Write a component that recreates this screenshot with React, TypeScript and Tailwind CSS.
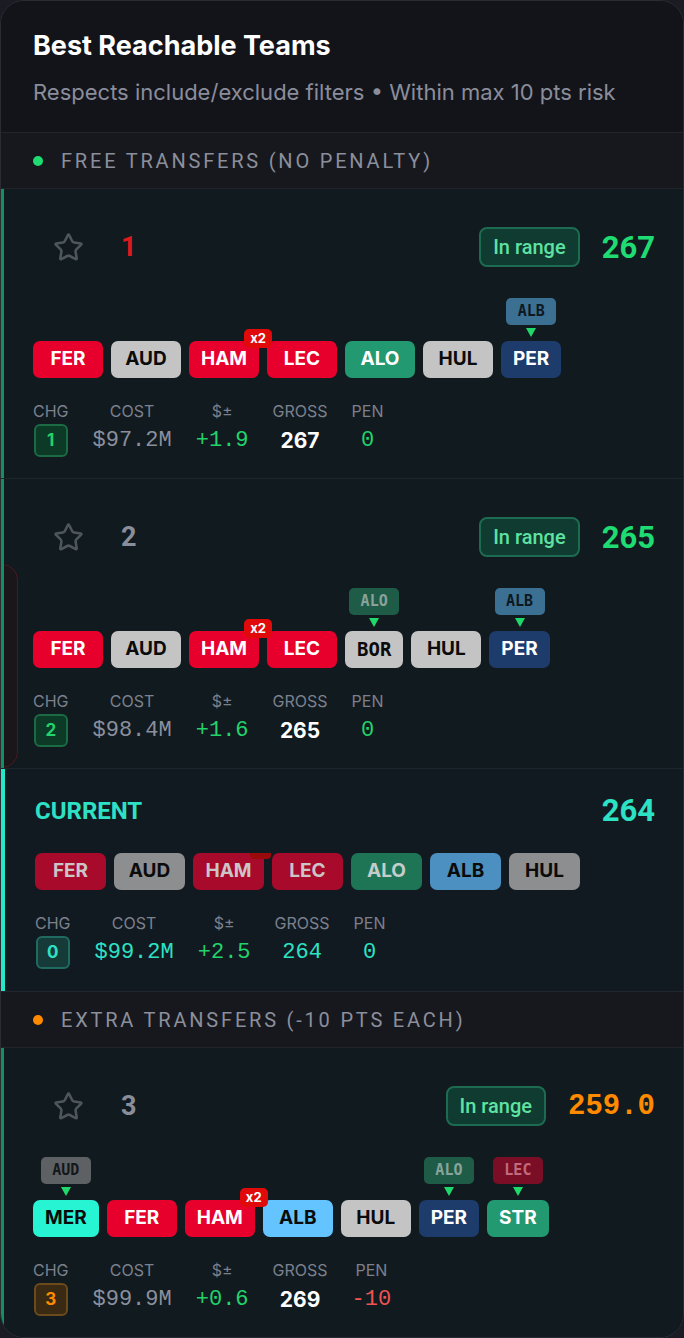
import { Star } from 'lucide-react'

type Tag = { code: string; cls: string }

type Pick = {
  code: string
  cls: string
  mono?: boolean
  x2?: boolean
  tag?: Tag
}

type Stat = {
  chg: string
  cost: string
  delta: string
  gross: string
  pen: string
}

type Team = {
  rank: string
  rankCls: string
  score: string
  scoreCls: string
  chgCls: string
  penCls: string
  picks: Array<Pick>
  stat: Stat
  ghost?: boolean
}

const RED = 'bg-[#e8002d] text-white'
const GREY = 'bg-[#c4c4c4] text-[#0b0b0b]'
const GREEN = 'bg-[#229971] text-white'
const NAVY = 'bg-[#1d3b6b] text-white'

const TAG_ALB: Tag = { code: 'ALB', cls: 'bg-[#3c7093] text-[#0d1820]' }
const TAG_ALO: Tag = { code: 'ALO', cls: 'bg-[#1e5c48] text-[#8aa39a]' }
const TAG_LEC: Tag = { code: 'LEC', cls: 'bg-[#7a0e26] text-[#c06b7d]' }
const TAG_AUD: Tag = { code: 'AUD', cls: 'bg-[#5e6164] text-[#14181b]' }

const FREE_TEAMS: Array<Team> = [
  {
    rank: '1',
    rankCls: 'text-[#dc1b1f]',
    score: '267',
    scoreCls: "text-[#1fdc72] font-['Roboto'] font-bold text-[31px]",
    chgCls: 'border-[#1b6b45] bg-[#0c3a26] text-[#22d36c]',
    penCls: 'text-[#22d36c]',
    picks: [
      { code: 'FER', cls: RED },
      { code: 'AUD', cls: GREY },
      { code: 'HAM', cls: RED, x2: true },
      { code: 'LEC', cls: RED },
      { code: 'ALO', cls: GREEN },
      { code: 'HUL', cls: GREY },
      { code: 'PER', cls: NAVY, tag: TAG_ALB }
    ],
    stat: { chg: '1', cost: '$97.2M', delta: '+1.9', gross: '267', pen: '0' }
  },
  {
    rank: '2',
    rankCls: 'text-[#8a8e9a]',
    score: '265',
    scoreCls: "text-[#1fdc72] font-['Roboto'] font-bold text-[31px]",
    chgCls: 'border-[#1b6b45] bg-[#0c3a26] text-[#22d36c]',
    penCls: 'text-[#22d36c]',
    ghost: true,
    picks: [
      { code: 'FER', cls: RED },
      { code: 'AUD', cls: GREY },
      { code: 'HAM', cls: RED, x2: true },
      { code: 'LEC', cls: RED },
      { code: 'BOR', cls: GREY, mono: true, tag: TAG_ALO },
      { code: 'HUL', cls: GREY },
      { code: 'PER', cls: NAVY, tag: TAG_ALB }
    ],
    stat: { chg: '2', cost: '$98.4M', delta: '+1.6', gross: '265', pen: '0' }
  }
]

const EXTRA_TEAM: Team = {
  rank: '3',
  rankCls: 'text-[#8a8e9a]',
  score: '259.0',
  scoreCls: "text-[#ff8a00] font-['Liberation_Mono',monospace] font-bold text-[29px]",
  chgCls: 'border-[#6b4a1c] bg-[#3a2a14] text-[#ff8a00]',
  penCls: 'text-[#f05454]',
  picks: [
    { code: 'MER', cls: 'bg-[#27f4d2] text-[#0b0b0b]', tag: TAG_AUD },
    { code: 'FER', cls: RED },
    { code: 'HAM', cls: RED, x2: true },
    { code: 'ALB', cls: 'bg-[#64c4ff] text-[#0b0b0b]' },
    { code: 'HUL', cls: GREY },
    { code: 'PER', cls: NAVY, tag: TAG_ALO },
    { code: 'STR', cls: GREEN, tag: TAG_LEC }
  ],
  stat: { chg: '3', cost: '$99.9M', delta: '+0.6', gross: '269', pen: '-10' }
}

const CURRENT_PICKS: Array<Pick> = [
  { code: 'FER', cls: 'bg-[#a80a2b] text-[#cbc5c7]' },
  { code: 'AUD', cls: 'bg-[#8d8e90] text-[#0b0b0b]' },
  { code: 'HAM', cls: 'bg-[#a80a2b] text-[#cbc5c7]', x2: true },
  { code: 'LEC', cls: 'bg-[#a80a2b] text-[#cbc5c7]' },
  { code: 'ALO', cls: 'bg-[#1e7556] text-[#c4cdc9]' },
  { code: 'ALB', cls: 'bg-[#4b90c0] text-[#0b0b0b]' },
  { code: 'HUL', cls: 'bg-[#8d8e90] text-[#0b0b0b]' }
]

const MONO = "font-['Liberation_Mono',monospace]"

const App = () => {
  return (
    <div className="min-h-screen bg-[#1b1c23] font-['Inter',sans-serif]">
      <div className="rounded-[24px] border border-[#2a2b33] overflow-hidden bg-[#121a20]">
        <Header />
        <SectionHeader dot="bg-[#1fdc72]" label="Free Transfers (No Penalty)" />
        {FREE_TEAMS.map((it) => (
          <TeamCard key={it.rank} team={it} />
        ))}
        <CurrentCard />
        <SectionHeader dot="bg-[#ff8a00]" label="Extra Transfers (-10 pts each)" />
        <TeamCard team={EXTRA_TEAM} last />
      </div>
    </div>
  )
}

const Header = () => {
  return (
    <header className="bg-[#13141a] px-[32px] pt-[29px] pb-[26px] border-b border-[#24252c]">
      <h1 className="text-[27px] leading-8 font-bold text-white">Best Reachable Teams</h1>
      <p className="mt-4 text-[22px] leading-7 text-[#8a8d9c]">
        Respects include/exclude filters • Within max 10 pts risk
      </p>
    </header>
  )
}

const SectionHeader = ({ dot, label }: { dot: string; label: string }) => {
  return (
    <div className="h-[56px] flex items-center gap-[18px] px-[32px] bg-[#17181e] border-b border-[#22242b]">
      <span className={`w-[10px] h-[10px] rounded-full ${dot}`} />
      <span className="font-['Roboto',sans-serif] text-[20px] uppercase tracking-[0.14em] text-[#8b8f9c]">
        {label}
      </span>
    </div>
  )
}

const TeamCard = ({ team, last }: { team: Team; last?: boolean }) => {
  return (
    <div
      className={`relative bg-[#111a1f] pl-[32px] pr-[28px] pt-[38px] pb-[21px] ${last ? '' : 'border-b border-[#1d262b]'}`}
    >
      {team.ghost && (
        <div className="absolute left-[-22px] top-[85px] w-[39px] h-[204px] rounded-[16px] border border-[#4a1a20] bg-[#1a1619]" />
      )}
      <div className="absolute inset-y-0 left-0 w-[3px] bg-[#13905f]" />

      <div className="relative h-[40px] flex items-center">
        <button className="ml-[20px] text-[#4f555c]">
          <Star size={31} strokeWidth={2} />
        </button>
        <span className={`ml-[37px] font-['Roboto',sans-serif] font-bold text-[27px] ${team.rankCls}`}>
          {team.rank}
        </span>
        <div className="ml-auto flex items-center gap-[22px]">
          <span className="h-[40px] px-[12px] flex items-center rounded-lg border-2 border-[#1d6b50] bg-[#0f3b31] font-['Roboto',sans-serif] font-medium text-[20px] text-[#5ee2a1]">
            In range
          </span>
          <span className={`leading-none ${team.scoreCls}`}>{team.score}</span>
        </div>
      </div>

      <div className="relative mt-[31px] h-[80px] flex items-end gap-2">
        {team.picks.map((it) => (
          <PickChip key={it.code} pick={it} />
        ))}
      </div>

      <Stats
        stat={team.stat}
        chgCls={team.chgCls}
        costCls="text-[#8b8f9d]"
        deltaCls="text-[#22d36c]"
        grossCls="text-white font-bold text-[21px]"
        penCls={team.penCls}
      />
    </div>
  )
}

const PickChip = ({ pick }: { pick: Pick }) => {
  const chip = (
    <div
      className={`relative h-[37px] flex items-center justify-center rounded-[7px] text-[19px] font-bold ${
        pick.tag ? 'px-3' : 'w-[70px]'
      } ${pick.mono ? "font-['DejaVu_Sans_Mono',monospace] text-[19px]" : ''} ${pick.cls}`}
    >
      {pick.code}
      {pick.x2 && (
        <span className="absolute -top-[12px] -right-[13px] z-10 w-[28px] h-[19px] flex items-center justify-center rounded-[5px] bg-[#e00a0a] text-white text-[13px] font-bold leading-none">
          x2
        </span>
      )}
    </div>
  )
  if (!pick.tag) return chip
  return (
    <div className="flex flex-col items-center">
      <span
        className={`w-[50px] h-[27px] flex items-center justify-center rounded-[5px] font-['DejaVu_Sans_Mono',monospace] font-bold text-[15px] ${pick.tag.cls}`}
      >
        {pick.tag.code}
      </span>
      <span className="mt-[3px] w-0 h-0 border-l-[5px] border-r-[5px] border-t-[9px] border-l-transparent border-r-transparent border-t-[#1fd96b]" />
      <div className="mt-[4px]">{chip}</div>
    </div>
  )
}

type StatsProps = {
  stat: Stat
  chgCls: string
  costCls: string
  deltaCls: string
  grossCls: string
  penCls: string
}

const Stats = (props: StatsProps) => {
  const { stat, chgCls, costCls, deltaCls, grossCls, penCls } = props
  const cols = [
    {
      label: 'CHG',
      value: (
        <span className={`w-[34px] h-[33px] flex items-center justify-center rounded-md border-2 text-[17px] font-bold ${chgCls}`}>
          {stat.chg}
        </span>
      )
    },
    { label: 'COST', value: <span className={`${MONO} text-[22px] ${costCls}`}>{stat.cost}</span> },
    { label: '$±', value: <span className={`${MONO} text-[22px] ${deltaCls}`}>{stat.delta}</span> },
    { label: 'GROSS', value: <span className={grossCls}>{stat.gross}</span> },
    { label: 'PEN', value: <span className={`${MONO} text-[22px] ${penCls}`}>{stat.pen}</span> }
  ]
  return (
    <div className="mt-[23px] flex gap-[24px]">
      {cols.map((it) => (
        <div key={it.label} className="flex flex-col items-center">
          <span className="text-[16px] leading-5 text-[#7c808d]">{it.label}</span>
          <div className="mt-[3px] h-[33px] flex items-center">{it.value}</div>
        </div>
      ))}
    </div>
  )
}

const CurrentCard = () => {
  return (
    <div className="relative bg-[#121a21] pl-[34px] pr-[28px] pt-[27px] pb-[22px] border-b border-[#20262c]">
      <div className="absolute inset-y-0 left-0 w-[4px] bg-[#25e8c8]" />
      <div className="h-[30px] flex items-center justify-between">
        <span className="font-['Roboto',sans-serif] font-bold text-[24px] text-[#2de2c4]">CURRENT</span>
        <span className="font-['Roboto',sans-serif] font-bold text-[31px] text-[#2de2c4]">264</span>
      </div>
      <div className="mt-[27px] flex gap-2">
        {CURRENT_PICKS.map((it) => (
          <div
            key={it.code}
            className={`relative w-[71px] h-[37px] flex items-center justify-center rounded-[7px] text-[19px] font-bold ${it.cls}`}
          >
            {it.code}
            {it.x2 && (
              <span className="absolute top-0 -right-[7px] w-[21px] h-[6px] rounded-b-[4px] bg-[#9b0a0a]" />
            )}
          </div>
        ))}
      </div>
      <Stats
        stat={{ chg: '0', cost: '$99.2M', delta: '+2.5', gross: '264', pen: '0' }}
        chgCls="border-[#1f6b60] bg-[#163a37] text-[#2de2c4]"
        costCls="text-[#2de2c4]"
        deltaCls="text-[#22d36c]"
        grossCls={`${MONO} text-[22px] text-[#2de2c4]`}
        penCls="text-[#2de2c4]"
      />
    </div>
  )
}

export default App
